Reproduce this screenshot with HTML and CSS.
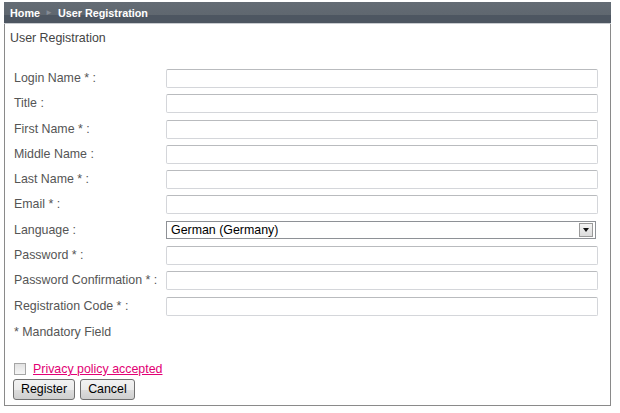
FILE: index.html
```html
<!DOCTYPE html>
<html lang="en">
<head>
    <meta charset="UTF-8">
    <title>User Registration</title>
    <link rel="stylesheet" href="styles.css">
</head>
<body>
<div class="frame">
    <div class="crumbs">
        <span class="crumb">Home</span>
        <span class="sep">&#9658;</span>
        <span class="crumb">User Registration</span>
    </div>
    <h1 class="title">User Registration</h1>
    <form class="form">
        <div class="grid">
            <label>Login Name * :</label><input class="field" type="text">
            <label>Title :</label><input class="field" type="text">
            <label>First Name * :</label><input class="field" type="text">
            <label>Middle Name :</label><input class="field" type="text">
            <label>Last Name * :</label><input class="field" type="text">
            <label>Email * :</label><input class="field" type="text">
            <label>Language :</label>
            <div class="select">
                <span class="value">German (Germany)</span>
                <span class="arrow"><span class="tri"></span></span>
            </div>
            <label>Password * :</label><input class="field" type="password">
            <label>Password Confirmation * :</label><input class="field" type="password">
            <label>Registration Code * :</label><input class="field" type="text">
        </div>
        <p class="note">* Mandatory Field</p>
        <div class="privacy">
            <span class="check"></span>
            <a href="#" class="link">Privacy policy accepted</a>
        </div>
        <div class="buttons">
            <button type="button" class="btn">Register</button>
            <button type="button" class="btn">Cancel</button>
        </div>
    </form>
</div>
</body>
</html>
```
FILE: styles.css
```css
* {
    margin: 0;
    padding: 0;
    box-sizing: border-box;
}
body {
    font-family: "Liberation Sans", Arial, sans-serif;
    font-size: 12.4px;
    color: #555;
    background: #fff;
}
.frame {
    margin: 2px 0 0 4px;
    width: 607px;
    height: 404px;
    border: 1px solid #8a8a8a;
    border-top: none;
}
.crumbs {
    height: 22px;
    margin: 0 -1px;
    padding-left: 6px;
    display: flex;
    align-items: center;
    gap: 5px;
    background: linear-gradient(#646c75 0, #5f676f 62%, #4d5661 63%, #4d5661 100%);
    border-bottom: 1px solid #c9ccd0;
}
.crumbs .crumb {
    color: #fff;
    font-weight: bold;
    font-size: 10.8px;
}
.crumbs .sep {
    color: #858c95;
    font-size: 8px;
}
.title {
    font-size: 12.4px;
    font-weight: normal;
    color: #444;
    padding: 7px 0 0 5px;
    line-height: 15px;
}
.form {
    padding: 23px 0 0 9px;
}
.grid {
    display: grid;
    grid-template-columns: 152px 432px;
    row-gap: 6.3px;
    align-items: center;
}
.grid label {
    line-height: 19px;
    color: #555;
}
.field {
    height: 19px;
    width: 432px;
    border: 1px solid #d4d6da;
    border-top-color: #b9bbbe;
    border-radius: 2px;
    background: #fff;
    outline: none;
}
.select {
    height: 18px;
    width: 430px;
    border: 1px solid #8e9196;
    display: flex;
    align-items: center;
    justify-content: space-between;
    padding: 0 2px 0 4px;
    background: #fff;
}
.select .value {
    color: #000;
}
.select .arrow {
    width: 14px;
    height: 14px;
    border: 1px solid #9a9a9a;
    background: linear-gradient(#f4f4f4, #dcdcdc);
    display: flex;
    align-items: center;
    justify-content: center;
}
.select .tri {
    width: 0;
    height: 0;
    border-left: 3px solid transparent;
    border-right: 3px solid transparent;
    border-top: 4px solid #111;
}
.note {
    margin-top: 9px;
    line-height: 15px;
}
.privacy {
    margin-top: 22px;
    display: flex;
    align-items: center;
    gap: 7px;
    height: 15px;
}
.check {
    width: 12px;
    height: 12px;
    border: 1px solid #a6a6a6;
    background: linear-gradient(#e2e2e2, #f6f6f6);
}
.link {
    color: #e20074;
    text-decoration: underline;
}
.buttons {
    margin-top: 2px;
    display: flex;
    gap: 5px;
    margin-left: -1px;
}
.btn {
    height: 21px;
    padding: 0 7px;
    font-family: "Liberation Sans", Arial, sans-serif;
    font-size: 12.4px;
    color: #000;
    border: 1px solid #707070;
    border-radius: 3px;
    background: linear-gradient(#f2f2f2 0, #ebebeb 50%, #dddddd 51%, #cfcfcf 100%);
}
```
